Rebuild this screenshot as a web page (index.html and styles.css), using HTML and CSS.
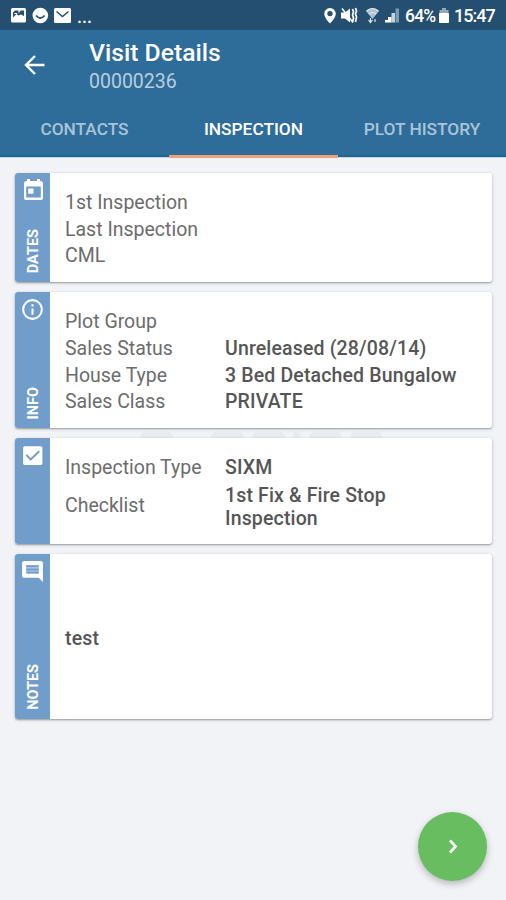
FILE: index.html
```html
<!DOCTYPE html>
<html lang="en">
<head>
<meta charset="utf-8">
<title>Visit Details</title>
<link rel="stylesheet" href="styles.css">
</head>
<body>
<div class="status">
  <svg class="notif" width="84" height="30" viewBox="0 0 84 30">
    <rect x="11" y="8" width="15" height="14.500" rx="1.500" fill="#fff"/>
    <path d="M13 17.500V12.500l2-2h3.500v3l2-3H24v5.500l-3-1.500-2.500 1-2-1.500z" fill="#244f70"/>
    <path d="M14.500 13.500h2.500" stroke="#fff" fill="none"/>
    <circle cx="40.300" cy="15.500" r="7.800" fill="#fff"/>
    <path d="M36 15.500q4.300 5 8.600 0" stroke="#244f70" stroke-width="1.800" fill="none"/>
    <rect x="54" y="8" width="17" height="15" rx="1.500" fill="#fff"/>
    <path d="M56.500 11.500l6 5 6-5" stroke="#244f70" stroke-width="1.500" fill="none"/>
  </svg>
  <span class="more">...</span>
  <svg class="signals" width="80" height="30" viewBox="0 0 80 30">
    <path d="M10 8a5.800 5.800 0 0 0-5.800 5.800C4.200 18 10 23.500 10 23.500s5.800-5.500 5.800-9.700A5.800 5.800 0 0 0 10 8zm0 8.300a2.700 2.700 0 1 1 0-5.400 2.700 2.700 0 0 1 0 5.400z" fill="#fff" fill-rule="evenodd"/>
    <path d="M21 12.500h4l5-4v14l-5-4h-4z" fill="#fff"/>
    <path d="M22 8.500l11 14" stroke="#fff" stroke-width="1.500"/>
    <path d="M32.500 9l1 3-1 3 1 3-1 4M35.500 8l1 3-1 3 1 3-1 5" stroke="#fff" stroke-width="1.700" fill="none"/>
    <path d="M46 11q6.500-6 13 0l-6.500 8z" fill="#aec3d2"/>
    <path d="M46.500 11q6-5 12 0M49 14q3.500-3 7 0" stroke="#e2eaf1" stroke-width="1.200" fill="none"/>
    <path d="M50.500 18v4m-2-2l2 2.500 2-2.500M55 22v-3" stroke="#dfe8ef" stroke-width="1.200" fill="none"/>
    <path d="M65 22.500v-2.500h3v2.500zM68 22.500V17h3.500v5.500z" fill="#fff"/>
    <path d="M71.500 22.500V13h3.500v9.500z" fill="#c5d3de"/>
    <path d="M75.500 22.500V8.500h3.500v14z" fill="#7f9bb0"/>
  </svg>
  <span class="pct">64%</span>
  <svg class="battery" width="12" height="30" viewBox="0 0 12 30">
    <path d="M4 8h4v2h2.500v4h-9v-4H4z" fill="#91a9bb"/>
    <rect x="1" y="13" width="10" height="10" rx="1" fill="#fff"/>
  </svg>
  <span class="time">15:47</span>
</div>
<header>
  <svg class="back" width="22" height="22" viewBox="0 0 22 22"><path d="M20.500 11H2.500M11 2L2 11l9 9" fill="none" stroke="#fff" stroke-width="2.400"/></svg>
  <div class="titles">
    <h1>Visit Details</h1>
    <p>00000236</p>
  </div>
</header>
<nav>
  <a><span>CONTACTS</span></a>
  <a class="active"><span>INSPECTION</span></a>
  <a><span>PLOT HISTORY</span></a>
</nav>
<main>
  <section class="card dates">
    <div class="side">
      <svg width="24" height="24" viewBox="0 0 24 24"><path fill="#fff" fill-rule="evenodd" d="M19.500 3H19V1h-3v2H9V1H6v2h-.5a2.500 2.500 0 0 0-2.500 2.500V20a2 2 0 0 0 2 2h15a2 2 0 0 0 2-2V5.500A2.500 2.500 0 0 0 19.500 3zm.3 16.500H5.200V8.500h14.600zM7.200 10.500h5.300v5.300H7.200z"/></svg>
      <b>DATES</b>
    </div>
    <dl>
      <dt>1st Inspection</dt><dd></dd>
      <dt>Last Inspection</dt><dd></dd>
      <dt>CML</dt><dd></dd>
    </dl>
  </section>
  <section class="card info">
    <div class="side">
      <svg width="25" height="25" viewBox="0 0 24 24"><path fill="#fff" d="M11 17h2v-6h-2v6zm1-15a10 10 0 1 0 0 20 10 10 0 0 0 0-20zm0 18a8 8 0 1 1 0-16 8 8 0 0 1 0 16zM11 9h2V7h-2v2z"/></svg>
      <b>INFO</b>
    </div>
    <dl>
      <dt>Plot Group</dt><dd></dd>
      <dt>Sales Status</dt><dd>Unreleased (28/08/14)</dd>
      <dt>House Type</dt><dd>3 Bed Detached Bungalow</dd>
      <dt>Sales Class</dt><dd>PRIVATE</dd>
    </dl>
  </section>
  <div class="mark"><i></i><i></i><i></i><i></i><i></i><i></i></div>
  <section class="card check">
    <div class="side">
      <svg width="25" height="25" viewBox="0 0 24 24"><rect x="3" y="3" width="18.500" height="18" rx="1.500" fill="#fff"/><path d="M6 11.500l4.300 4.300L18.500 8" stroke="#719dcb" stroke-width="1.900" fill="none"/></svg>
    </div>
    <dl>
      <dt>Inspection Type</dt><dd>SIXM</dd>
      <dt>Checklist</dt><dd class="multi">1st Fix &amp; Fire Stop<br>Inspection</dd>
    </dl>
  </section>
  <section class="card notes">
    <div class="side">
      <svg width="25" height="25" viewBox="0 0 24 24"><path fill="#fff" d="M21.990 4c0-1.100-.89-2-1.990-2H4c-1.100 0-2 .9-2 2v12c0 1.100.9 2 2 2h14l4 4-.01-18zM18 14H6v-2h12v2zm0-3H6V9h12v2zm0-3H6V6h12v2z"/><path d="M6 6h12v8H6z" fill="#719dcb" opacity=".5"/></svg>
      <b>NOTES</b>
    </div>
    <p class="note">test</p>
  </section>
</main>
<button class="fab" aria-label="Next"><svg width="14" height="18" viewBox="0 0 14 18"><path d="M4 2.500l5.500 6L4 14.500" fill="none" stroke="#fff" stroke-width="2.600"/></svg></button>
</body>
</html>
```
FILE: styles.css
```css
* { box-sizing: border-box; margin: 0; padding: 0; }
body {
  width: 506px; height: 900px; overflow: hidden;
  background: #f1f3f6; color: #6c6c6c;
  font-family: Roboto, "Liberation Sans", sans-serif;
  display: flex; flex-direction: column;
}
.status { height: 30px; background: #244f70; display: flex; line-height: 32px; color: #fff; flex: none; white-space: nowrap; }
.more { width: 40px; margin-left: -7px; font-size: 18px; font-weight: 500; line-height: 34px; }
.signals { margin-left: 203px; }
.pct { width: 33px; margin-left: 5px; font-size: 17.500px; font-weight: 500; letter-spacing: -.8px; }
.time { margin-left: 4px; font-size: 18px; font-weight: 500; letter-spacing: -1px; }
header { height: 72px; background: #2e6c99; display: flex; flex: none; }
.back { margin: 24px 0 0 24px; }
.titles { margin: 6px 0 0 43px; }
h1 { color: #fff; font-size: 24.700px; line-height: 33px; font-weight: 500; white-space: nowrap; }
.titles p { color: #b9cfdf; font-size: 19.500px; line-height: 26px; }
nav { height: 56px; background: #2e6c99; display: grid; grid-template-columns: 169px 169px 168px; grid-template-rows: 55px; flex: none; border-bottom: 1px solid #c5d8e5; }
nav a { display: flex; justify-content: center; color: #a9c4d8; font-size: 17.300px; font-weight: 500; line-height: 54px; border-bottom: 2px solid #1f6592; white-space: nowrap; overflow: hidden; }
nav .active { color: #fff; border-bottom: 3px solid #eea078; margin-bottom: -1px; }
main { padding: 15px 14px 0 15px; display: flex; flex-direction: column; }
.card { background: #fff; border-radius: 3px; display: flex; overflow: hidden; box-shadow: 0 1px 3px rgba(0,0,0,.3), 0 1px 1px rgba(0,0,0,.12); margin-bottom: 10px; }
.dates { height: 109px; }
.info { height: 136px; margin-bottom: 0; }
.check { height: 106px; }
.notes { height: 165px; }
.side { width: 35px; background: #719dcb; display: flex; flex-direction: column; align-items: center; justify-content: space-between; padding: 5px 0 9px; }
.side b { color: #fff; writing-mode: vertical-rl; transform: rotate(180deg); font-size: 14.500px; line-height: 18px; font-weight: 700; margin-left: 2px; }
dl { display: grid; grid-template-columns: 160px 250px; align-content: center; font-size: 19.500px; line-height: 26.700px; padding: 5px 0 0 15px; }
dt, dd { min-height: 26.700px; white-space: nowrap; align-self: center; }
dd, .note { color: #565656; font-weight: 500; letter-spacing: .15px; }
.multi { line-height: 23px; padding: 2px 0; }
.mark { height: 10px; margin-left: 125px; display: flex; align-items: flex-end; overflow: hidden; }
.mark i { height: 7px; background: #e9ebee; border-radius: 14px 14px 0 0; width: 33px; margin-right: 8px; }
.mark i:first-child { margin-right: 38px; }
.mark i:nth-child(4) { width: 8px; }
.note { font-size: 19.500px; padding: 3px 0 0 15px; align-self: center; }
.fab { position: absolute; left: 418px; top: 812px; width: 69px; height: 69px; border: 0; border-radius: 50%; background: #68bd61; display: flex; align-items: center; justify-content: center; box-shadow: 0 3px 7px rgba(0,0,0,.25); }
```
